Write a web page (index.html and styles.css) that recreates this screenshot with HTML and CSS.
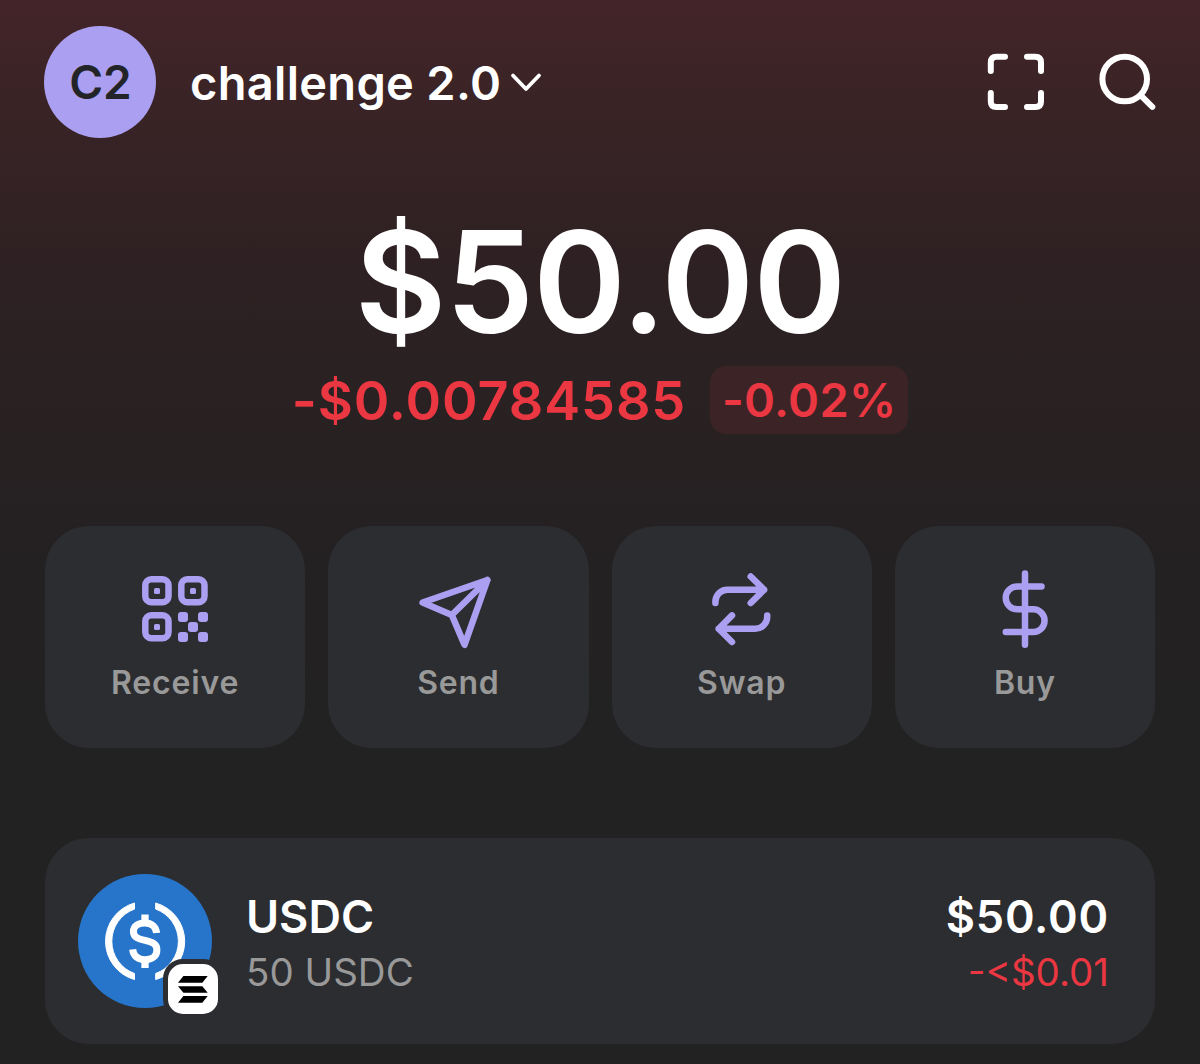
FILE: index.html
```html
<!DOCTYPE html>
<html lang="en">
<head>
    <meta charset="UTF-8">
    <meta name="viewport" content="width=device-width, initial-scale=1.0">
    <title>Wallet</title>
    <link rel="stylesheet" href="styles.css">
</head>
<body>
    <div class="wallet">
        <header class="header">
            <div class="avatar">C2</div>
            <div class="account">
                <span class="account-name">challenge 2.0</span>
                <svg class="chevron" viewBox="0 0 32 20"><path d="M3 3.5l13 13.5L29 3.5"/></svg>
            </div>
            <div class="header-icons">
                <svg class="header-icon" viewBox="0 0 60 60">
                    <path d="M4.8 19V10.5Q4.8 4.8 10.5 4.8H19M41 4.8H49.3Q55 4.8 55 10.5V19M55 41V49.5Q55 55 49.3 55H41M19 55H10.5Q4.8 55 4.8 49.5V41"/>
                </svg>
                <svg class="header-icon" viewBox="0 0 60 60">
                    <circle cx="26.7" cy="27" r="22.3"/>
                    <path d="M43 43.6l11.3 11.2"/>
                </svg>
            </div>
        </header>

        <div class="balance">$50.00</div>
        <div class="change">
            <span class="change-amount">-$0.00784585</span>
            <span class="change-percent">-0.02%</span>
        </div>

        <div class="actions">
            <div class="action">
                <svg class="action-icon" viewBox="0 0 80 80">
                    <rect x="10.3" y="10.3" width="23.2" height="23" rx="6"/>
                    <rect x="46.3" y="10.3" width="23.2" height="23" rx="6"/>
                    <rect x="10.3" y="46.3" width="23.2" height="23" rx="6"/>
                    <g class="solid">
                        <rect x="19" y="19" width="6" height="6" rx="1.5"/>
                        <rect x="55" y="19" width="6" height="6" rx="1.5"/>
                        <rect x="19" y="55" width="6" height="6" rx="1.5"/>
                        <rect x="43" y="43" width="10" height="10" rx="3"/>
                        <rect x="63" y="43" width="10" height="10" rx="3"/>
                        <rect x="53" y="53" width="10" height="10" rx="3"/>
                        <rect x="43" y="63" width="10" height="10" rx="3"/>
                        <rect x="63" y="63" width="10" height="10" rx="3"/>
                    </g>
                </svg>
                <span class="action-label">Receive</span>
            </div>
            <div class="action">
                <svg class="action-icon" viewBox="0 0 80 80">
                    <path d="M4.6 33.5L69.4 11L46.5 75.8L33.8 46ZM33.8 46L69.4 11"/>
                </svg>
                <span class="action-label">Send</span>
            </div>
            <div class="action">
                <svg class="action-icon" viewBox="0 0 80 80">
                    <path d="M13.4 34V32.7A12 12 0 0 1 25.4 20.7H62.1M48.7 7.5L62.1 20.7L48.7 34"/>
                    <path d="M65.2 46.4V47.7A12 12 0 0 1 53.2 59.7H16.7M30 46.4L16.7 59.7L30 73"/>
                </svg>
                <span class="action-label">Swap</span>
            </div>
            <div class="action">
                <svg class="action-icon" viewBox="0 0 80 80">
                    <path d="M40 4.5V75.8M56.5 17.4H32.2A11.45 11.45 0 0 0 32.2 40.3H48.2A11.35 11.35 0 0 1 48.2 63H20.8"/>
                </svg>
                <span class="action-label">Buy</span>
            </div>
        </div>

        <div class="token">
            <div class="token-logo">
                <svg class="usdc" viewBox="0 0 134 134">
                    <circle cx="67" cy="67" r="67" fill="#2775ca"/>
                    <g fill="#fff" stroke="#fff" stroke-linejoin="round">
                        <path d="M56.5 29A39.8 39.8 0 0 0 56.5 105.6V99.5A34.2 34.2 0 0 1 56.5 35.1Z"/>
                        <path d="M77.7 29A39.8 39.8 0 0 1 77.7 105.6V99.5A34.2 34.2 0 0 0 77.7 35.1Z"/>
                    </g>
                    <path d="M67 40.5V48M67 87V94" fill="none" stroke="#fff" stroke-width="7.3"/>
                    <path d="M78.6 59C78 52.5 73.5 49 67 49C60 49 55.4 52.4 55.4 57.6C55.4 63.4 60.5 65 67 66.4C74 68 78.9 69.8 78.9 76C78.9 82 74 85.7 67 85.7C60 85.7 55.3 82 54.7 75.4" fill="none" stroke="#fff" stroke-width="7"/>
                </svg>
                <div class="chain-badge">
                    <svg viewBox="0 0 50 50">
                        <path d="M15.4 12H39.7L34.3 18.7H10ZM10 22.2H34.3L39.7 28.7H15.4ZM15.4 32H39.7L34.3 38.7H10Z"/>
                    </svg>
                </div>
            </div>
            <div class="token-info">
                <div class="token-name">USDC</div>
                <div class="token-amount">50 USDC</div>
            </div>
            <div class="token-value">
                <div class="token-usd">$50.00</div>
                <div class="token-change">-&lt;$0.01</div>
            </div>
        </div>
    </div>
</body>
</html>
```
FILE: styles.css
```css
* {
    box-sizing: border-box;
}
body {
    margin: 0;
    background: #222222;
    color: #fff;
    font-family: Inter, sans-serif;
}
.wallet {
    height: 1064px;
    padding: 26px 45px 0;
    background: linear-gradient(#432429 0, #382325 120px, #2f2123 250px, #292122 400px, #242122 560px, #222222 780px);
    overflow: hidden;
    white-space: nowrap;
}
.header {
    display: flex;
    align-items: center;
    height: 112px;
}
.avatar {
    width: 112px;
    height: 112px;
    margin-left: -1px;
    padding-left: 1px;
    border-radius: 50%;
    background: #ab9ff2;
    color: #222428;
    font-size: 46px;
    font-weight: 600;
    line-height: 112px;
    text-align: center;
}
.account {
    display: flex;
    align-items: center;
    gap: 9px;
    margin-left: 34px;
}
.account-name {
    font-size: 47px;
    font-weight: 600;
    letter-spacing: 0.3px;
}
.chevron {
    width: 32px;
    height: 20px;
    fill: none;
    stroke: #fff;
    stroke-width: 3.8;
    stroke-linecap: round;
    stroke-linejoin: round;
}
.header-icons {
    display: flex;
    gap: 52px;
    margin-left: auto;
    margin-right: -3px;
}
.header-icon {
    width: 60px;
    height: 60px;
    fill: none;
    stroke: #fff;
    stroke-width: 6;
    stroke-linecap: round;
}
.balance {
    margin-top: 74px;
    font-size: 141px;
    font-weight: 600;
    letter-spacing: -1px;
    line-height: 140px;
    text-align: center;
}
.change {
    display: flex;
    justify-content: center;
    align-items: center;
    gap: 24px;
    height: 68px;
    margin-top: 14px;
    color: #eb3742;
}
.change-amount {
    font-size: 54px;
    font-weight: 600;
    letter-spacing: 0.9px;
}
.change-percent {
    width: 198px;
    border-radius: 16px;
    background: #3c2426;
    font-size: 47px;
    font-weight: 600;
    letter-spacing: 0.3px;
    line-height: 68px;
    text-align: center;
}
.actions {
    display: grid;
    grid-template-columns: repeat(4, 1fr);
    gap: 23px;
    margin-top: 92px;
}
.action {
    display: flex;
    flex-direction: column;
    align-items: center;
    height: 222px;
    padding-top: 43px;
    border-radius: 44px;
    background: #2c2d30;
}
.action-icon {
    width: 80px;
    height: 80px;
    fill: none;
    stroke: #ab9ff2;
    stroke-width: 6.5;
    stroke-linecap: round;
    stroke-linejoin: round;
}
.solid {
    fill: #ab9ff2;
    stroke: none;
}
.action-label {
    margin-top: 14px;
    color: #999;
    font-size: 32px;
    font-weight: 600;
    letter-spacing: 0.8px;
    line-height: 40px;
}
.token {
    display: flex;
    align-items: center;
    height: 206px;
    margin-top: 90px;
    padding: 0 46px 0 33px;
    border-radius: 44px;
    background: #2c2d30;
}
.token-logo {
    position: relative;
    width: 134px;
    height: 134px;
}
.usdc {
    display: block;
}
.chain-badge {
    position: absolute;
    right: -11px;
    bottom: -11px;
    width: 60px;
    height: 60px;
    border: 5px solid #2c2d30;
    border-radius: 20px;
    background: #fff;
}
.chain-badge svg {
    display: block;
}
.token-info,
.token-value {
    padding-top: 2px;
}
.token-info {
    margin-left: 34px;
}
.token-name,
.token-usd {
    font-size: 45px;
    font-weight: 600;
    line-height: 60px;
}
.token-usd {
    letter-spacing: 0.8px;
}
.token-amount,
.token-change {
    color: #999;
    font-size: 38.5px;
    line-height: 50px;
}
.token-value {
    margin-left: auto;
    text-align: right;
}
.token-change {
    color: #eb3742;
}
```
